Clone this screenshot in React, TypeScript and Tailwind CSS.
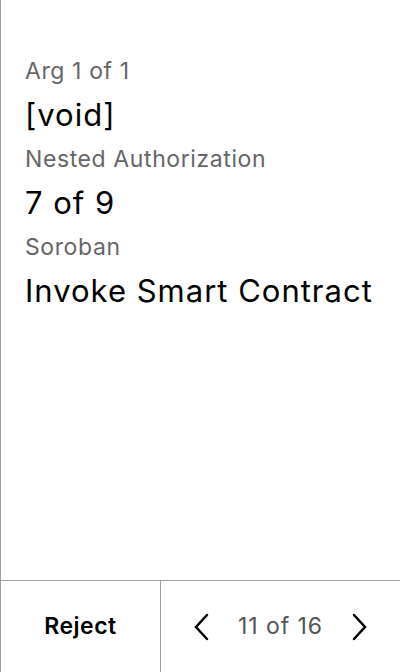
export default function App() {
  return (
    <div className="flex h-[672px] w-[400px] flex-col border-l border-[#a0a0a0] bg-white font-['Inter',sans-serif] text-black">
      <div className="flex flex-1 flex-col px-6 pt-[49px]">
        <p className="text-[23px] leading-[44px] tracking-[0.6px] text-[#666666]">Arg 1 of 1</p>
        <p className="text-[31px] leading-[44px] tracking-[1px]">[void]</p>
        <p className="text-[23px] leading-[44px] tracking-[0.6px] text-[#666666]">Nested Authorization</p>
        <p className="text-[31px] leading-[44px] tracking-[1px]">7 of 9</p>
        <p className="text-[23px] leading-[44px] tracking-[0.6px] text-[#666666]">Soroban</p>
        <p className="text-[31px] leading-[44px] tracking-[1px]">Invoke Smart Contract</p>
      </div>

      {/* footer */}
      <div className="flex h-[92px] border-t border-[#a0a0a0]">
        <button className="flex w-[160px] items-center justify-center border-r border-[#a0a0a0] text-[23px] font-semibold tracking-[0.5px]">
          Reject
        </button>
        <div className="flex flex-1 items-center justify-between px-[30px]">
          <svg width="20" height="28" viewBox="0 0 20 28" fill="none" stroke="black" strokeWidth="2.5" strokeLinecap="round">
            <path d="M16 2 L5 14 L16 26" />
          </svg>
          <span className="text-[23px] tracking-[0.9px] text-[#555555]">11 of 16</span>
          <svg width="20" height="28" viewBox="0 0 20 28" fill="none" stroke="black" strokeWidth="2.5" strokeLinecap="round">
            <path d="M4 2 L15 14 L4 26" />
          </svg>
        </div>
      </div>
    </div>
  );
}
